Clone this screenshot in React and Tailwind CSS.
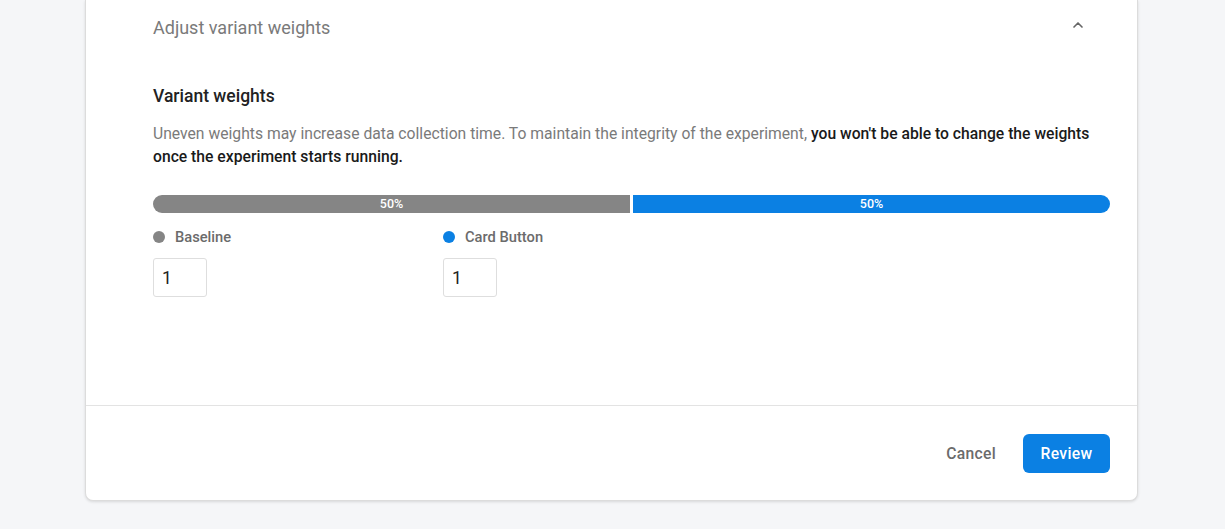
import { ChevronUp } from 'lucide-react';

const variants = [
  { name: 'Baseline', dot: 'bg-[#858585]', value: '1' },
  { name: 'Card Button', dot: 'bg-[#0b80e3]', value: '1' },
];

export default function App() {
  return (
    <div className="min-h-screen bg-[#f5f6f8] font-['Roboto',sans-serif]">
      <div className="ml-[85px] w-[1053px] bg-white border border-t-0 border-[#dcdcdc] rounded-b-lg shadow-[0_1px_3px_rgba(0,0,0,0.12)]">
        {/* Collapsible header */}
        <div className="h-[56px] pl-[67px] pr-[51px] flex items-center justify-between">
          <span className="text-[18px] text-[#7a7a7a] leading-[22px]">Adjust variant weights</span>
          <ChevronUp size={16} strokeWidth={2.5} className="text-[#666] -mt-[6px]" />
        </div>

        <div className="pl-[67px] pr-[27px] pb-[108px]">
          <h3 className="mt-[28px] text-[17.5px] leading-[24px] font-medium text-[#222]">Variant weights</h3>
          <p className="mt-[14px] text-[15.7px] leading-[23px] text-[#7a7a7a]">
            Uneven weights may increase data collection time. To maintain the integrity of the experiment,{' '}
            <span className="font-medium text-[#1a1a1a]">you won't be able to change the weights once the experiment starts running.</span>
          </p>

          {/* Weight bar */}
          <div className="mt-[27px] flex h-[18px] gap-[3px]">
            <div className="flex-1 rounded-l-full bg-[#858585] flex items-center justify-center text-[12.5px] font-medium text-white">50%</div>
            <div className="flex-1 rounded-r-full bg-[#0b80e3] flex items-center justify-center text-[12.5px] font-medium text-white">50%</div>
          </div>

          <div className="mt-[14px] flex">
            {variants.map((v) => (
              <div key={v.name} className="w-[290px]">
                <div className="flex items-center gap-[10px] h-[20px]">
                  <span className={`w-[12px] h-[12px] rounded-full ${v.dot}`} />
                  <span className="text-[14.7px] font-medium text-[#6b6b6b]">{v.name}</span>
                </div>
                <input
                  readOnly
                  value={v.value}
                  className="mt-[11px] w-[54px] h-[39px] border border-[#dedede] rounded-[3px] px-[8px] text-[17.5px] text-[#222] outline-none"
                />
              </div>
            ))}
          </div>
        </div>

        <div className="border-t border-[#e3e3e3] pt-[28px] pb-[27px] pr-[27px] flex justify-end items-center gap-[27px]">
          <button className="text-[15.7px] font-medium text-[#6b6b6b] tracking-[0.3px]">Cancel</button>
          <button className="h-[39px] w-[87px] rounded-[6px] bg-[#0b80e3] text-white text-[15.7px] font-medium tracking-[0.3px]">Review</button>
        </div>
      </div>
    </div>
  );
}
